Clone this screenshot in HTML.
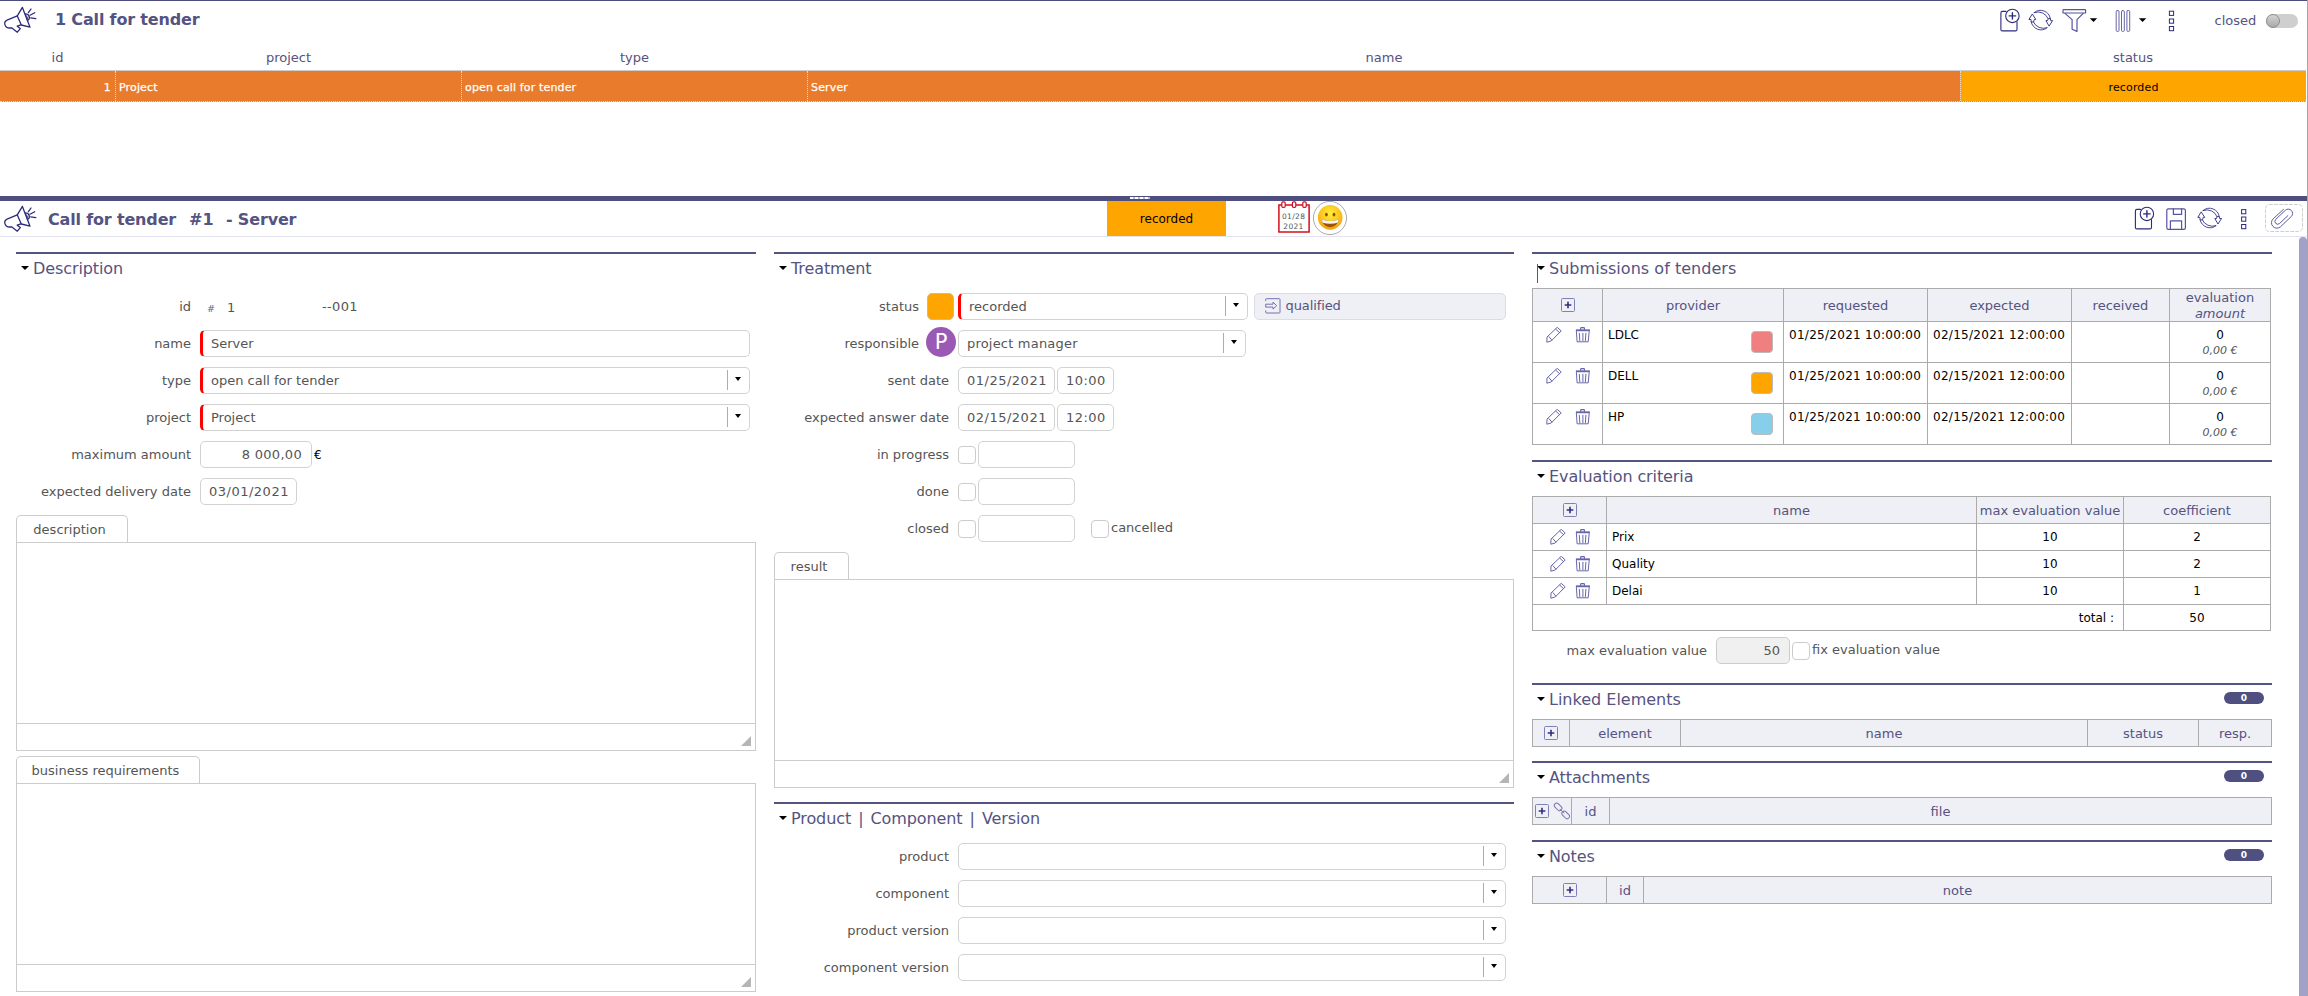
<!DOCTYPE html>
<html lang="en">
<head>
<meta charset="utf-8">
<title>Call for tender</title>
<style>
*{box-sizing:border-box;margin:0;padding:0}
html,body{width:2308px;height:996px;overflow:hidden;background:#fff}
body{font-family:"DejaVu Sans","Liberation Sans",sans-serif;font-size:13px;color:#555;position:relative}
.abs{position:absolute}
.pc{color:#545381}
/* list */
#topline{left:0;top:0;width:2307px;height:1px;background:#4c4d7d}
.ttl{font-weight:bold;font-size:16px;letter-spacing:-.17px;color:#545381;white-space:nowrap;line-height:20px}
.lh{top:49px;height:18px;line-height:18px;color:#545381;text-align:center;font-size:13px}
#row{left:0;top:70px;width:2306px;height:32px;background:#e97b2c;border-top:1px solid #ccc;border-bottom:1px dotted #f6d5bd}
#row .c{position:absolute;top:0;height:30px;line-height:33.5px;font-size:11px;color:#fff;white-space:nowrap;letter-spacing:.15px;-webkit-text-stroke:.25px #fff;border-right:1px dotted #f6d5bd}
#splitter{left:0;top:196px;width:2307px;height:5px;background:#4e4f7f}
#dhead{left:0;top:201px;width:2307px;height:36px;border-bottom:1px solid #e3e3ef}
/* sections */
.sline{height:2px;background:#545381}
.stitle{font-size:16px;color:#545381;line-height:20px;white-space:nowrap;margin-top:1px;letter-spacing:-.1px}
.arr{width:0;height:0;border-left:4px solid transparent;border-right:4px solid transparent;border-top:4px solid #000}
.lbl{text-align:right;line-height:27px;height:27px;white-space:nowrap;color:#555}
.inp{height:27px;border:1px solid #d2d2d2;border-radius:5px;background:#fff;line-height:25px;padding-left:8px;color:#555;white-space:nowrap}
.req{border-left:3px solid #f00}
.sel:after{content:"";position:absolute;right:21px;top:2px;height:20px;width:1px;background:#acacac}
.sel:before{content:"";position:absolute;right:8px;top:8.500px;border-left:3.600px solid transparent;border-right:3.600px solid transparent;border-top:4px solid #000}
.chk{width:18px;height:18px;border:1px solid #ccc;border-radius:4px;background:#fff}
.tab{height:28px;border:1px solid #ccc;border-bottom:none;border-radius:5px 5px 0 0;line-height:28px;padding-right:5px;text-align:center;background:#fff;color:#555}
.ed{border:1px solid #ccc;background:#fff}
.ed i{position:absolute;left:0;right:0;bottom:26px;height:1px;background:#ccc}
.ed b{position:absolute;right:4px;bottom:4px;width:0;height:0;border-left:10px solid transparent;border-bottom:10px solid #b5b5b5}
/* tables */
table.g{position:absolute;border-collapse:collapse;table-layout:fixed;font-size:12px;color:#000}
table.g td,table.g th{border:1px solid #ababab;padding:0;overflow:hidden;white-space:nowrap}
table.g th{background:#efeff6;color:#545381;font-weight:normal;font-size:13px;text-align:center;vertical-align:middle}
table.g td{vertical-align:top}
.plus{position:absolute}
.badge{width:40px;height:12px;border-radius:6px;background:#4f4f80;color:#fff;font-size:9px;font-weight:bold;line-height:12.500px;text-align:center}
.sw{position:absolute;width:22px;height:22px;border-radius:4px;border:1px solid #bbb}

td.ic,td.ic2{position:relative}
td.ic svg,td.ic2 svg{position:absolute}
td.ic .pen{left:13px;top:5px}
td.ic .tr{left:42px;top:5px}
td.ic2 .pen{left:17px;top:5px}
td.ic2 .tr{left:42px;top:5px}
td.pv{padding:6px 0 0 5px !important;position:relative}
td.pv .sw{right:10px;top:9px}
td.dt{padding:6px 0 0 5px !important;letter-spacing:.28px}
td.ev{text-align:center;padding-top:6px !important;line-height:15px}
td.ev em{font-size:11px;color:#555}
td.nm{padding:6px 0 0 5px !important}
td.ct{text-align:center;padding-top:6px !important}
td.tot{text-align:right;padding:6px 9px 0 0 !important}
.lk{position:absolute;left:20px;top:4px}
</style>
</head>
<body>
<!-- LIST -->
<div class="abs" id="topline"></div>
<div class="abs ttl" style="left:55px;top:10px">1 Call for tender</div>
<div class="abs lh" style="left:0;width:115px">id</div>
<div class="abs lh" style="left:116px;width:345px">project</div>
<div class="abs lh" style="left:462px;width:345px">type</div>
<div class="abs lh" style="left:808px;width:1152px">name</div>
<div class="abs lh" style="left:1960px;width:346px">status</div>
<div class="abs" id="row">
  <div class="c" style="left:0;width:116px;text-align:right;padding-right:4px">1</div>
  <div class="c" style="left:116px;width:346px;padding-left:3px">Project</div>
  <div class="c" style="left:462px;width:346px;padding-left:3px">open call for tender</div>
  <div class="c" style="left:808px;width:1152px;padding-left:3px;border-right:none">Server</div>
  <div class="c" style="left:1960px;width:346px;background:#ffa500;color:#000;-webkit-text-stroke:0;text-align:center;border-right:none;border-left:1px dotted #f6d5bd">recorded</div>
</div>
<div class="abs" style="left:2214.500px;top:12px;line-height:18px;color:#545381">closed</div>
<div class="abs" style="left:2266px;top:14px;width:32px;height:14px;border-radius:7px;background:#cfcfcf"><div class="abs" style="left:0;top:0;width:14px;height:14px;border-radius:7px;background:linear-gradient(#d4d4d4,#a8a8a8);border:1px solid #8e8e8e"></div></div>

<svg class="abs" style="left:0;top:0" width="2308" height="40" viewBox="0 0 2308 40" fill="none" stroke="#2b2b7c" stroke-width="1.1" stroke-linejoin="round" stroke-linecap="round">
<g id="mega1" stroke-width="1.3">
<path d="M22.4 7.4L30 27.2 21.3 25 17.3 15.9z"/>
<path d="M17.3 15.9L7.6 19.8C5 20.9 4.3 22.6 4.9 24.6 5.8 27.5 7.6 28.6 11.6 27.8L17.3 32.2 20.3 28.6 17.2 26.2 20.9 24.8"/>
<path d="M25.3 13.9C29.5 14 30.6 18.5 27.8 20.3"/>
<path d="M26.3 15.8C27.7 16.6 27.9 18.2 27.2 19.4" stroke-width="1"/>
<path d="M28.4 12.7L31 9M30 15.3L34.7 12.8M30.7 17.9L35.800 18.700"/>
</g>
<!-- new -->
<path d="M2006 11.4H2002.4Q2000.9 11.4 2000.9 12.9V29.4Q2000.9 30.9 2002.4 30.9H2015.5Q2017 30.9 2017 29.4V21.5"/>
<circle cx="2012.4" cy="15.9" r="6.7" fill="#fff"/>
<path d="M2009.2 15.9H2015.6M2012.4 12.7V19.1" stroke-width="1.4"/>
<!-- refresh -->
<g stroke-width=".9">
<path d="M2034.2 12.6A9.9 9.9 0 0 1 2050.3 18.8L2048.3 19.2A10.900 10.900 0 0 0 2034.2 12.6z" fill="none" stroke-width=".85"/>
<path d="M2048.9 25.8L2045.9 20.6H2047.6L2048.200 18.800 2050.300 18.400 2050.700 20.600H2052.200z" fill="#fff"/>
<path d="M2031.2 22A9.900 9.900 0 0 0 2047.300 27.600A11 11 0 0 1 2033.2 21.600z" fill="none" stroke-width=".85"/>
<path d="M2032.5 14.300L2035.800 19.500H2034.300L2033.600 22 2031.200 22 2031 19.500H2029.300z" fill="#fff"/>
</g>
<!-- filter -->
<g stroke="#5554a0" stroke-width="1.2">
<rect x="2063" y="9.6" width="22.6" height="3.4" rx=".6"/>
<path d="M2065 13.4L2072.1 19.6V29.2L2077 31.4V19.6L2083.2 13.4"/>
</g>
<path d="M2089.8 18.2h7.4l-3.7 3.9z" fill="#000" stroke="none"/>
<!-- columns -->
<g stroke="#6665a8" stroke-width="1">
<rect x="2116.2" y="10.6" width="2.8" height="20.8" rx="1"/>
<rect x="2121.5" y="10.6" width="2.8" height="20.8" rx="1"/>
<rect x="2126.9" y="10.6" width="2.8" height="20.8" rx="1"/>
</g>
<path d="M2138.9 18.2h7.4l-3.7 3.9z" fill="#000" stroke="none"/>
<!-- dots -->
<g stroke-width="1" stroke-linejoin="miter">
<rect x="2169.4" y="11.2" width="4.2" height="4.2"/>
<rect x="2169.4" y="19" width="4.2" height="4.2"/>
<rect x="2169.4" y="26.5" width="4.2" height="4.2"/>
</g>
</svg>
<div class="abs" id="splitter"></div>
<div class="abs" style="left:1130px;top:197px;width:20px;height:2px;background:repeating-linear-gradient(90deg,#fff 0,#fff 3px,#b9b9cf 3px,#b9b9cf 5px)"></div>

<!-- DETAIL HEADER -->
<div class="abs" id="dhead"></div>
<div class="abs ttl" style="left:48px;top:210px">Call for tender</div><div class="abs ttl" style="left:189px;top:210px;letter-spacing:.2px">#1</div><div class="abs ttl" style="left:226px;top:210px">- Server</div>
<div class="abs" style="left:1107px;top:201px;width:119px;height:35px;background:#ffa500;color:#000;font-size:12px;line-height:37px;text-align:center">recorded</div>

<svg class="abs" style="left:0;top:198px" width="2308" height="42" viewBox="0 198 2308 42" fill="none" stroke="#2b2b7c" stroke-width="1.1" stroke-linejoin="round" stroke-linecap="round">
<g transform="translate(0 199)" stroke-width="1.3">
<path d="M22.4 7.4L30 27.2 21.3 25 17.3 15.9z"/>
<path d="M17.3 15.9L7.6 19.8C5 20.9 4.3 22.6 4.9 24.6 5.8 27.5 7.6 28.6 11.6 27.8L17.3 32.2 20.3 28.6 17.2 26.2 20.9 24.8"/>
<path d="M25.3 13.9C29.5 14 30.6 18.5 27.8 20.3"/>
<path d="M26.3 15.8C27.7 16.6 27.9 18.2 27.2 19.4" stroke-width="1"/>
<path d="M28.4 12.7L31 9M30 15.3L34.7 12.8M30.7 17.9L35.800 18.700"/>
</g>
<!-- calendar -->
<g stroke="#d2101c" stroke-width="1.500" stroke-linejoin="miter">
<rect x="1278.9" y="205" width="30.2" height="27" fill="#fff"/>
<rect x="1281.8" y="201.8" width="3.4" height="5.6" rx="1.2" fill="#fff" stroke-width="1.2"/>
<rect x="1292.4" y="201.8" width="3.4" height="5.6" rx="1.2" fill="#fff" stroke-width="1.2"/>
<rect x="1302.8" y="201.8" width="3.4" height="5.6" rx="1.2" fill="#fff" stroke-width="1.2"/>
</g>
<text x="1293.600" y="218.700" font-size="7.500" letter-spacing=".35" fill="#555" stroke="none" text-anchor="middle" font-family="DejaVu Sans, sans-serif">01/28</text>
<text x="1293.500" y="228.600" font-size="7.500" letter-spacing=".3" fill="#555" stroke="none" text-anchor="middle" font-family="DejaVu Sans, sans-serif">2021</text>
<!-- smiley -->
<circle cx="1330" cy="218" r="16.6" fill="#fff" stroke="#aaa" stroke-width="1"/>
<circle cx="1330.2" cy="217.4" r="12.3" fill="url(#sg)" stroke="none"/>
<ellipse cx="1326.4" cy="214.6" rx="1.4" ry="1.9" fill="#8a4b08" stroke="none"/>
<ellipse cx="1334" cy="214.6" rx="1.4" ry="1.9" fill="#8a4b08" stroke="none"/>
<path d="M1321.8 219.6C1326 221.4 1334.4 221.4 1338.6 219.6 1338 224.4 1334.6 227.2 1330.2 227.2 1325.8 227.2 1322.4 224.4 1321.8 219.6z" fill="#9a5606" stroke="none"/>
<path d="M1321.8 219.6C1326 221.4 1334.4 221.4 1338.6 219.6 1338.4 221 1338 222 1337.6 222.8 1333 224 1327.400 224 1322.800 222.800 1322.4 222 1322 221 1321.800 219.600z" fill="#f4f4f4" stroke="none"/>
<!-- new -->
<g transform="translate(134.500 198)">
<path d="M2006 11.4H2002.4Q2000.9 11.4 2000.9 12.9V29.4Q2000.9 30.9 2002.4 30.9H2015.5Q2017 30.9 2017 29.4V21.5"/>
<circle cx="2012.4" cy="15.9" r="6.7" fill="#fff"/>
<path d="M2009.2 15.9H2015.6M2012.4 12.700V19.1" stroke-width="1.4"/>
</g>
<!-- save -->
<g stroke="#5554a0" stroke-width="1.2">
<rect x="2166.8" y="208.800" width="18.6" height="20.6" rx="1.6"/>
<path d="M2173.4 208.800V214.400H2181.600V208.800"/>
<path d="M2170.400 229.400V220.800H2181.600V229.400"/>
</g>
<!-- refresh -->
<g stroke-width=".9" transform="translate(168.9 197.9)">
<path d="M2034.2 12.6A9.9 9.9 0 0 1 2050.3 18.8L2048.3 19.2A10.900 10.900 0 0 0 2034.2 12.6z" fill="none" stroke-width=".85"/>
<path d="M2048.9 25.8L2045.9 20.6H2047.6L2048.200 18.800 2050.300 18.400 2050.700 20.600H2052.200z" fill="#fff"/>
<path d="M2031.2 22A9.900 9.900 0 0 0 2047.300 27.600A11 11 0 0 1 2033.2 21.600z" fill="none" stroke-width=".85"/>
<path d="M2032.5 14.300L2035.800 19.500H2034.300L2033.600 22 2031.200 22 2031 19.500H2029.300z" fill="#fff"/>
</g>
<!-- dots -->
<g stroke-width="1" stroke-linejoin="miter">
<rect x="2241.600" y="209.600" width="4.200" height="4.200"/>
<rect x="2241.600" y="217" width="4.200" height="4.200"/>
<rect x="2241.600" y="224.500" width="4.200" height="4.200"/>
</g>
<!-- paperclip -->
<rect x="2265.500" y="204.500" width="37" height="27" rx="4" stroke="#cfcfcf" stroke-width="1" stroke-dasharray="3 2"/>
<g stroke="#5c5ba2" stroke-width="1">
<path d="M2283.400 209.400L2273.200 218.800A5.400 5.400 0 0 0 2280.600 226.700L2291.200 216.600A4.300 4.300 0 0 0 2285.300 210.300L2275.800 219.300A2.800 2.800 0 0 0 2279.700 223.400L2287.900 215.600"/>
</g>
<defs><radialGradient id="sg" cx=".5" cy=".35" r=".7"><stop offset="0" stop-color="#ffee3a"/><stop offset=".6" stop-color="#fcc21b"/><stop offset="1" stop-color="#f0920c"/></radialGradient></defs>
</svg>
<!-- COLUMN 1 -->
<div id="col1">
<div class="abs sline" style="left:16px;top:252px;width:740px"></div>
<div class="abs arr" style="left:21px;top:266px"></div>
<div class="abs stitle" style="left:33px;top:258px">Description</div>
<div class="abs lbl" style="left:0;width:191px;top:293px">id</div>
<div class="abs" style="left:207px;top:295px;line-height:27px;font-size:9.500px;color:#666">#</div>
<div class="abs" style="left:227px;top:294px;line-height:27px">1</div>
<div class="abs" style="left:322px;top:293px;line-height:27px;letter-spacing:.35px">--001</div>
<div class="abs lbl" style="left:0;width:191px;top:330px">name</div>
<div class="abs inp req" style="left:200px;top:330px;width:550px">Server</div>
<div class="abs lbl" style="left:0;width:191px;top:367px">type</div>
<div class="abs inp req sel" style="left:200px;top:367px;width:550px">open call for tender</div>
<div class="abs lbl" style="left:0;width:191px;top:404px">project</div>
<div class="abs inp req sel" style="left:200px;top:404px;width:550px">Project</div>
<div class="abs lbl" style="left:0;width:191px;top:441px">maximum amount</div>
<div class="abs inp" style="left:200px;top:441px;width:112px;text-align:right;padding-right:9px;letter-spacing:.3px">8 000,00</div>
<div class="abs" style="left:314px;top:442px;line-height:27px;color:#000;font-size:12px">€</div>
<div class="abs lbl" style="left:0;width:191px;top:478px">expected delivery date</div>
<div class="abs inp" style="left:200px;top:478px;width:97px;letter-spacing:.5px">03/01/2021</div>
<div class="abs tab" style="left:16px;top:515px;width:112px">description</div>
<div class="abs ed" style="left:16px;top:542px;width:740px;height:209px"><i></i><b></b></div>
<div class="abs tab" style="left:16px;top:756px;width:184px">business requirements</div>
<div class="abs ed" style="left:16px;top:783px;width:740px;height:209px"><i></i><b></b></div>
</div>

<!-- COLUMN 2 -->
<div id="col2">
<div class="abs sline" style="left:774px;top:252px;width:740px"></div>
<div class="abs arr" style="left:779px;top:266px"></div>
<div class="abs stitle" style="left:791px;top:258px">Treatment</div>
<div class="abs lbl" style="left:758px;width:161px;top:293px">status</div>
<div class="abs" style="left:927px;top:293px;width:27px;height:27px;border-radius:5px;background:#ffa500;border:1px solid #bbb"></div>
<div class="abs inp req sel" style="left:958px;top:293px;width:290px">recorded</div>
<div class="abs" style="left:1254px;top:293px;width:252px;height:27px;border-radius:5px;background:#efeff6;border:1px solid #dcdce6;color:#545381;line-height:23px;padding-left:30.500px;letter-spacing:-.1px"><svg class="abs" style="left:9px;top:3px" width="20" height="20" viewBox="1264 297 20 20" fill="none" stroke="#7372b0" stroke-width="1" stroke-linejoin="round"><path d="M1265.7 301V299.400Q1265.700 298.700 1266.400 298.700H1279.300Q1280 298.700 1280 299.400V312.300Q1280 313 1279.300 313H1266.400Q1265.700 313 1265.700 312.300V310.500"/><path d="M1265.700 304.200H1273V302.200L1276.700 305.650 1273 309.100V307.100H1265.700z"/></svg>qualified</div>
<div class="abs lbl" style="left:758px;width:161px;top:330px">responsible</div>
<div class="abs" style="left:926px;top:327px;width:30px;height:30px;border-radius:15px;background:#9b59b6;color:#fff;font-size:21px;line-height:30px;text-align:center">P</div>
<div class="abs inp sel" style="left:958px;top:330px;width:288px;letter-spacing:.2px">project manager</div>
<div class="abs lbl" style="left:758px;width:191px;top:367px">sent date</div>
<div class="abs inp" style="left:958px;top:367px;width:97px;letter-spacing:.5px">01/25/2021</div>
<div class="abs inp" style="left:1057px;top:367px;width:57px;letter-spacing:.45px">10:00</div>
<div class="abs lbl" style="left:758px;width:191px;top:404px">expected answer date</div>
<div class="abs inp" style="left:958px;top:404px;width:97px;letter-spacing:.5px">02/15/2021</div>
<div class="abs inp" style="left:1057px;top:404px;width:57px;letter-spacing:.45px">12:00</div>
<div class="abs lbl" style="left:758px;width:191px;top:441px">in progress</div>
<div class="abs chk" style="left:958px;top:446px"></div>
<div class="abs inp" style="left:978px;top:441px;width:97px"></div>
<div class="abs lbl" style="left:758px;width:191px;top:478px">done</div>
<div class="abs chk" style="left:958px;top:483px"></div>
<div class="abs inp" style="left:978px;top:478px;width:97px"></div>
<div class="abs lbl" style="left:758px;width:191px;top:515px">closed</div>
<div class="abs chk" style="left:958px;top:520px"></div>
<div class="abs inp" style="left:978px;top:515px;width:97px"></div>
<div class="abs chk" style="left:1091px;top:520px"></div>
<div class="abs" style="left:1111px;top:514px;line-height:27px">cancelled</div>
<div class="abs tab" style="left:774px;top:552px;width:75px">result</div>
<div class="abs ed" style="left:774px;top:579px;width:740px;height:209px"><i></i><b></b></div>
<div class="abs sline" style="left:774px;top:802px;width:740px"></div>
<div class="abs arr" style="left:779px;top:816px"></div>
<div class="abs stitle" style="left:791px;top:808px;word-spacing:2.1px">Product | Component | Version</div>
<div class="abs lbl" style="left:758px;width:191px;top:843px">product</div>
<div class="abs inp sel" style="left:958px;top:843px;width:548px"></div>
<div class="abs lbl" style="left:758px;width:191px;top:880px">component</div>
<div class="abs inp sel" style="left:958px;top:880px;width:548px"></div>
<div class="abs lbl" style="left:758px;width:191px;top:917px">product version</div>
<div class="abs inp sel" style="left:958px;top:917px;width:548px"></div>
<div class="abs lbl" style="left:758px;width:191px;top:954px">component version</div>
<div class="abs inp sel" style="left:958px;top:954px;width:548px"></div>
</div>

<!-- COLUMN 3 -->
<div id="col3">
<div class="abs sline" style="left:1532px;top:252px;width:740px"></div>
<div class="abs arr" style="left:1537px;top:266px"></div>
<div class="abs" style="left:1537px;top:264px;width:1px;height:19px;background:#545381"></div>
<div class="abs stitle" style="left:1549px;top:258px;letter-spacing:.03px">Submissions of tenders</div>
<table class="g" id="t1" style="left:1532px;top:288px;width:738px">
<colgroup><col style="width:70px"><col style="width:181px"><col style="width:144px"><col style="width:144px"><col style="width:98px"><col style="width:101px"></colgroup>
<tr style="height:33px"><th><svg class="plus" style="left:28px;top:9px" width="14" height="14" viewBox="0 0 14 14"><rect x=".5" y=".5" width="13" height="13" rx="1" fill="none" stroke="#807fb6"/><path d="M3.700 7h6.600M7 3.700v6.600" stroke="#30307e" stroke-width="1.600"/></svg></th><th>provider</th><th>requested</th><th>expected</th><th>received</th><th style="line-height:16px"><div style="position:relative;top:1px;height:32px">evaluation<br><em>amount</em></div></th></tr>
<tr style="height:41px"><td class="ic"><svg class="pen" width="16" height="16" viewBox="0 0 16 16" fill="none" stroke="#6766aa" stroke-width="1" stroke-linejoin="round" stroke-linecap="round"><path d="M11.5.6L15.2 3.900 5.200 14 .8 15.200 1 10.400z"/><path d="M9.800 2.200l3.800 3.500M3 9.700l2.700 3.200"/></svg><svg class="tr" width="16" height="16" viewBox="0 0 16 16" fill="none" stroke="#6766aa" stroke-width="1" stroke-linejoin="round" stroke-linecap="round"><path d="M.9 3.300h14" stroke-width="1.900" stroke-linecap="butt"/><path d="M5.700 2.400V1.300q0-.6.600-.6h2.500q.6 0 .6.600v1.100" stroke-width="1.200"/><path d="M1.400 4.500l.7 10.300h11.100l1-10.300"/><path d="M4.300 6.300l.5 7.300M7.900 6.300v7.300M10.900 6.300l-.5 7.300"/></svg></td><td class="pv">LDLC<span class="sw" style="background:#f08080"></span></td><td class="dt">01/25/2021 10:00:00</td><td class="dt">02/15/2021 12:00:00</td><td></td><td class="ev">0<br><em>0,00 €</em></td></tr>
<tr style="height:41px"><td class="ic"><svg class="pen" width="16" height="16" viewBox="0 0 16 16" fill="none" stroke="#6766aa" stroke-width="1" stroke-linejoin="round" stroke-linecap="round"><path d="M11.5.6L15.2 3.900 5.200 14 .8 15.200 1 10.400z"/><path d="M9.800 2.200l3.800 3.500M3 9.700l2.700 3.200"/></svg><svg class="tr" width="16" height="16" viewBox="0 0 16 16" fill="none" stroke="#6766aa" stroke-width="1" stroke-linejoin="round" stroke-linecap="round"><path d="M.9 3.300h14" stroke-width="1.900" stroke-linecap="butt"/><path d="M5.700 2.400V1.300q0-.6.600-.6h2.500q.6 0 .6.600v1.100" stroke-width="1.200"/><path d="M1.400 4.500l.7 10.300h11.100l1-10.300"/><path d="M4.300 6.300l.5 7.300M7.900 6.300v7.300M10.900 6.300l-.5 7.300"/></svg></td><td class="pv">DELL<span class="sw" style="background:#ffa500"></span></td><td class="dt">01/25/2021 10:00:00</td><td class="dt">02/15/2021 12:00:00</td><td></td><td class="ev">0<br><em>0,00 €</em></td></tr>
<tr style="height:41px"><td class="ic"><svg class="pen" width="16" height="16" viewBox="0 0 16 16" fill="none" stroke="#6766aa" stroke-width="1" stroke-linejoin="round" stroke-linecap="round"><path d="M11.5.6L15.2 3.900 5.200 14 .8 15.200 1 10.400z"/><path d="M9.800 2.200l3.800 3.500M3 9.700l2.700 3.200"/></svg><svg class="tr" width="16" height="16" viewBox="0 0 16 16" fill="none" stroke="#6766aa" stroke-width="1" stroke-linejoin="round" stroke-linecap="round"><path d="M.9 3.300h14" stroke-width="1.900" stroke-linecap="butt"/><path d="M5.700 2.400V1.300q0-.6.600-.6h2.500q.6 0 .6.600v1.100" stroke-width="1.200"/><path d="M1.400 4.500l.7 10.300h11.100l1-10.300"/><path d="M4.300 6.300l.5 7.300M7.900 6.300v7.300M10.900 6.300l-.5 7.300"/></svg></td><td class="pv">HP<span class="sw" style="background:#87ceeb"></span></td><td class="dt">01/25/2021 10:00:00</td><td class="dt">02/15/2021 12:00:00</td><td></td><td class="ev">0<br><em>0,00 €</em></td></tr>
</table>

<div class="abs sline" style="left:1532px;top:460px;width:740px"></div>
<div class="abs arr" style="left:1537px;top:474px"></div>
<div class="abs stitle" style="left:1549px;top:466px">Evaluation criteria</div>
<table class="g" id="t2" style="left:1532px;top:496px;width:738px">
<colgroup><col style="width:74px"><col style="width:370px"><col style="width:147px"><col style="width:147px"></colgroup>
<tr style="height:27px"><th><svg class="plus" style="left:30px;top:6px" width="14" height="14" viewBox="0 0 14 14"><rect x=".5" y=".5" width="13" height="13" rx="1" fill="none" stroke="#807fb6"/><path d="M3.700 7h6.600M7 3.700v6.600" stroke="#30307e" stroke-width="1.600"/></svg></th><th>name</th><th>max evaluation value</th><th>coefficient</th></tr>
<tr style="height:27px"><td class="ic2"><svg class="pen" width="16" height="16" viewBox="0 0 16 16" fill="none" stroke="#6766aa" stroke-width="1" stroke-linejoin="round" stroke-linecap="round"><path d="M11.5.6L15.2 3.900 5.200 14 .8 15.200 1 10.400z"/><path d="M9.800 2.200l3.800 3.500M3 9.700l2.700 3.200"/></svg><svg class="tr" width="16" height="16" viewBox="0 0 16 16" fill="none" stroke="#6766aa" stroke-width="1" stroke-linejoin="round" stroke-linecap="round"><path d="M.9 3.300h14" stroke-width="1.900" stroke-linecap="butt"/><path d="M5.700 2.400V1.300q0-.6.600-.6h2.500q.6 0 .6.600v1.100" stroke-width="1.200"/><path d="M1.400 4.500l.7 10.300h11.100l1-10.300"/><path d="M4.300 6.300l.5 7.300M7.900 6.300v7.300M10.900 6.300l-.5 7.300"/></svg></td><td class="nm">Prix</td><td class="ct">10</td><td class="ct">2</td></tr>
<tr style="height:27px"><td class="ic2"><svg class="pen" width="16" height="16" viewBox="0 0 16 16" fill="none" stroke="#6766aa" stroke-width="1" stroke-linejoin="round" stroke-linecap="round"><path d="M11.5.6L15.2 3.900 5.200 14 .8 15.200 1 10.400z"/><path d="M9.800 2.200l3.800 3.500M3 9.700l2.700 3.200"/></svg><svg class="tr" width="16" height="16" viewBox="0 0 16 16" fill="none" stroke="#6766aa" stroke-width="1" stroke-linejoin="round" stroke-linecap="round"><path d="M.9 3.300h14" stroke-width="1.900" stroke-linecap="butt"/><path d="M5.700 2.400V1.300q0-.6.600-.6h2.500q.6 0 .6.600v1.100" stroke-width="1.200"/><path d="M1.400 4.500l.7 10.300h11.100l1-10.300"/><path d="M4.300 6.300l.5 7.300M7.900 6.300v7.300M10.900 6.300l-.5 7.300"/></svg></td><td class="nm">Quality</td><td class="ct">10</td><td class="ct">2</td></tr>
<tr style="height:27px"><td class="ic2"><svg class="pen" width="16" height="16" viewBox="0 0 16 16" fill="none" stroke="#6766aa" stroke-width="1" stroke-linejoin="round" stroke-linecap="round"><path d="M11.5.6L15.2 3.900 5.200 14 .8 15.200 1 10.400z"/><path d="M9.800 2.200l3.800 3.500M3 9.700l2.700 3.200"/></svg><svg class="tr" width="16" height="16" viewBox="0 0 16 16" fill="none" stroke="#6766aa" stroke-width="1" stroke-linejoin="round" stroke-linecap="round"><path d="M.9 3.300h14" stroke-width="1.900" stroke-linecap="butt"/><path d="M5.700 2.400V1.300q0-.6.600-.6h2.500q.6 0 .6.600v1.100" stroke-width="1.200"/><path d="M1.400 4.500l.7 10.300h11.100l1-10.300"/><path d="M4.300 6.300l.5 7.300M7.900 6.300v7.300M10.900 6.300l-.5 7.300"/></svg></td><td class="nm">Delai</td><td class="ct">10</td><td class="ct">1</td></tr>
<tr style="height:26px"><td colspan="3" class="tot">total :</td><td class="ct">50</td></tr>
</table>
<div class="abs lbl" style="left:1500px;width:207px;top:637px">max evaluation value</div>
<div class="abs inp" style="left:1716px;top:637px;width:74px;background:#f0f0f0;border-color:#ccc;text-align:right;padding-right:9px">50</div>
<div class="abs chk" style="left:1792px;top:642px"></div>
<div class="abs" style="left:1812px;top:636px;line-height:27px">fix evaluation value</div>

<div class="abs sline" style="left:1532px;top:683px;width:740px"></div>
<div class="abs arr" style="left:1537px;top:697px"></div>
<div class="abs stitle" style="left:1549px;top:689px;letter-spacing:0">Linked Elements</div>
<div class="abs badge" style="left:2224px;top:692px">0</div>
<table class="g" id="t3" style="left:1532px;top:719px;width:739px">
<colgroup><col style="width:37px"><col style="width:111px"><col style="width:407px"><col style="width:111px"><col style="width:73px"></colgroup>
<tr style="height:27px"><th><svg class="plus" style="left:11px;top:6px" width="14" height="14" viewBox="0 0 14 14"><rect x=".5" y=".5" width="13" height="13" rx="1" fill="none" stroke="#807fb6"/><path d="M3.700 7h6.600M7 3.700v6.600" stroke="#30307e" stroke-width="1.600"/></svg></th><th>element</th><th>name</th><th>status</th><th>resp.</th></tr>
</table>

<div class="abs sline" style="left:1532px;top:761px;width:740px"></div>
<div class="abs arr" style="left:1537px;top:775px"></div>
<div class="abs stitle" style="left:1549px;top:767px">Attachments</div>
<div class="abs badge" style="left:2224px;top:770px">0</div>
<table class="g" id="t4" style="left:1532px;top:797px;width:739px">
<colgroup><col style="width:39px"><col style="width:38px"><col style="width:662px"></colgroup>
<tr style="height:27px"><th><svg class="plus" style="left:2px;top:6px" width="14" height="14" viewBox="0 0 14 14"><rect x=".5" y=".5" width="13" height="13" rx="1" fill="none" stroke="#807fb6"/><path d="M3.700 7h6.600M7 3.700v6.600" stroke="#30307e" stroke-width="1.600"/></svg><svg class="lk" width="18" height="18" viewBox="1553 802 18 18" fill="none" stroke="#7473ae" stroke-width="1"><rect x="-2.4" y="-4.4" width="4.8" height="8.800" rx="2.400" transform="translate(1558.100 806.900) rotate(-45)"/><rect x="-2.400" y="-4.400" width="4.800" height="8.800" rx="2.400" transform="translate(1565.700 814.900) rotate(-45)"/><path d="M1559.700 808.900l4.400 4.400"/></svg></th><th>id</th><th>file</th></tr>
</table>

<div class="abs sline" style="left:1532px;top:840px;width:740px"></div>
<div class="abs arr" style="left:1537px;top:854px"></div>
<div class="abs stitle" style="left:1549px;top:846px">Notes</div>
<div class="abs badge" style="left:2224px;top:849px">0</div>
<table class="g" id="t5" style="left:1532px;top:876px;width:739px">
<colgroup><col style="width:74px"><col style="width:37px"><col style="width:628px"></colgroup>
<tr style="height:27px"><th><svg class="plus" style="left:30px;top:6px" width="14" height="14" viewBox="0 0 14 14"><rect x=".5" y=".5" width="13" height="13" rx="1" fill="none" stroke="#807fb6"/><path d="M3.700 7h6.600M7 3.700v6.600" stroke="#30307e" stroke-width="1.600"/></svg></th><th>id</th><th>note</th></tr>
</table>
</div>

<div class="abs" style="left:2307px;top:0;width:1px;height:996px;background:#a6a6a6"></div>
<!-- scrollbar -->
<div class="abs" style="left:2299px;top:237px;width:8px;height:770px;border-radius:4px;background:#a2a1c7"></div>
</body>
</html>
